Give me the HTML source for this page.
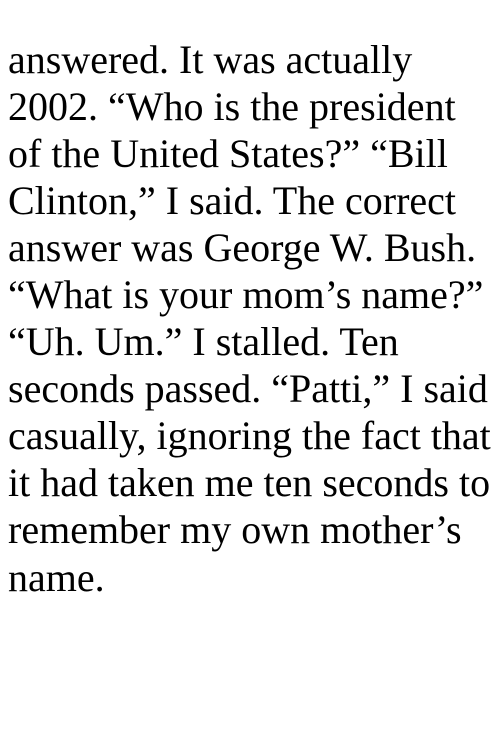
<!DOCTYPE html>
<html><head><meta charset="utf-8"><style>
html,body{margin:0;padding:0;background:#fff;}
body{width:500px;height:750px;overflow:hidden;}
p{margin:0;position:absolute;left:8px;top:35.5px;font-family:"Liberation Serif",serif;font-size:40px;line-height:47.1px;color:#000;white-space:nowrap;}
</style></head><body>
<p>answered. It was actually<br>2002. “Who is the president<br>of the United States?” “Bill<br>Clinton,” I said. The correct<br>answer was George W. Bush.<br>“What is your mom’s name?”<br>“Uh. Um.” I stalled. Ten<br>seconds passed. “Patti,” I said<br>casually, ignoring the fact that<br>it had taken me ten seconds to<br>remember my own mother’s<br>name.</p>
</body></html>
